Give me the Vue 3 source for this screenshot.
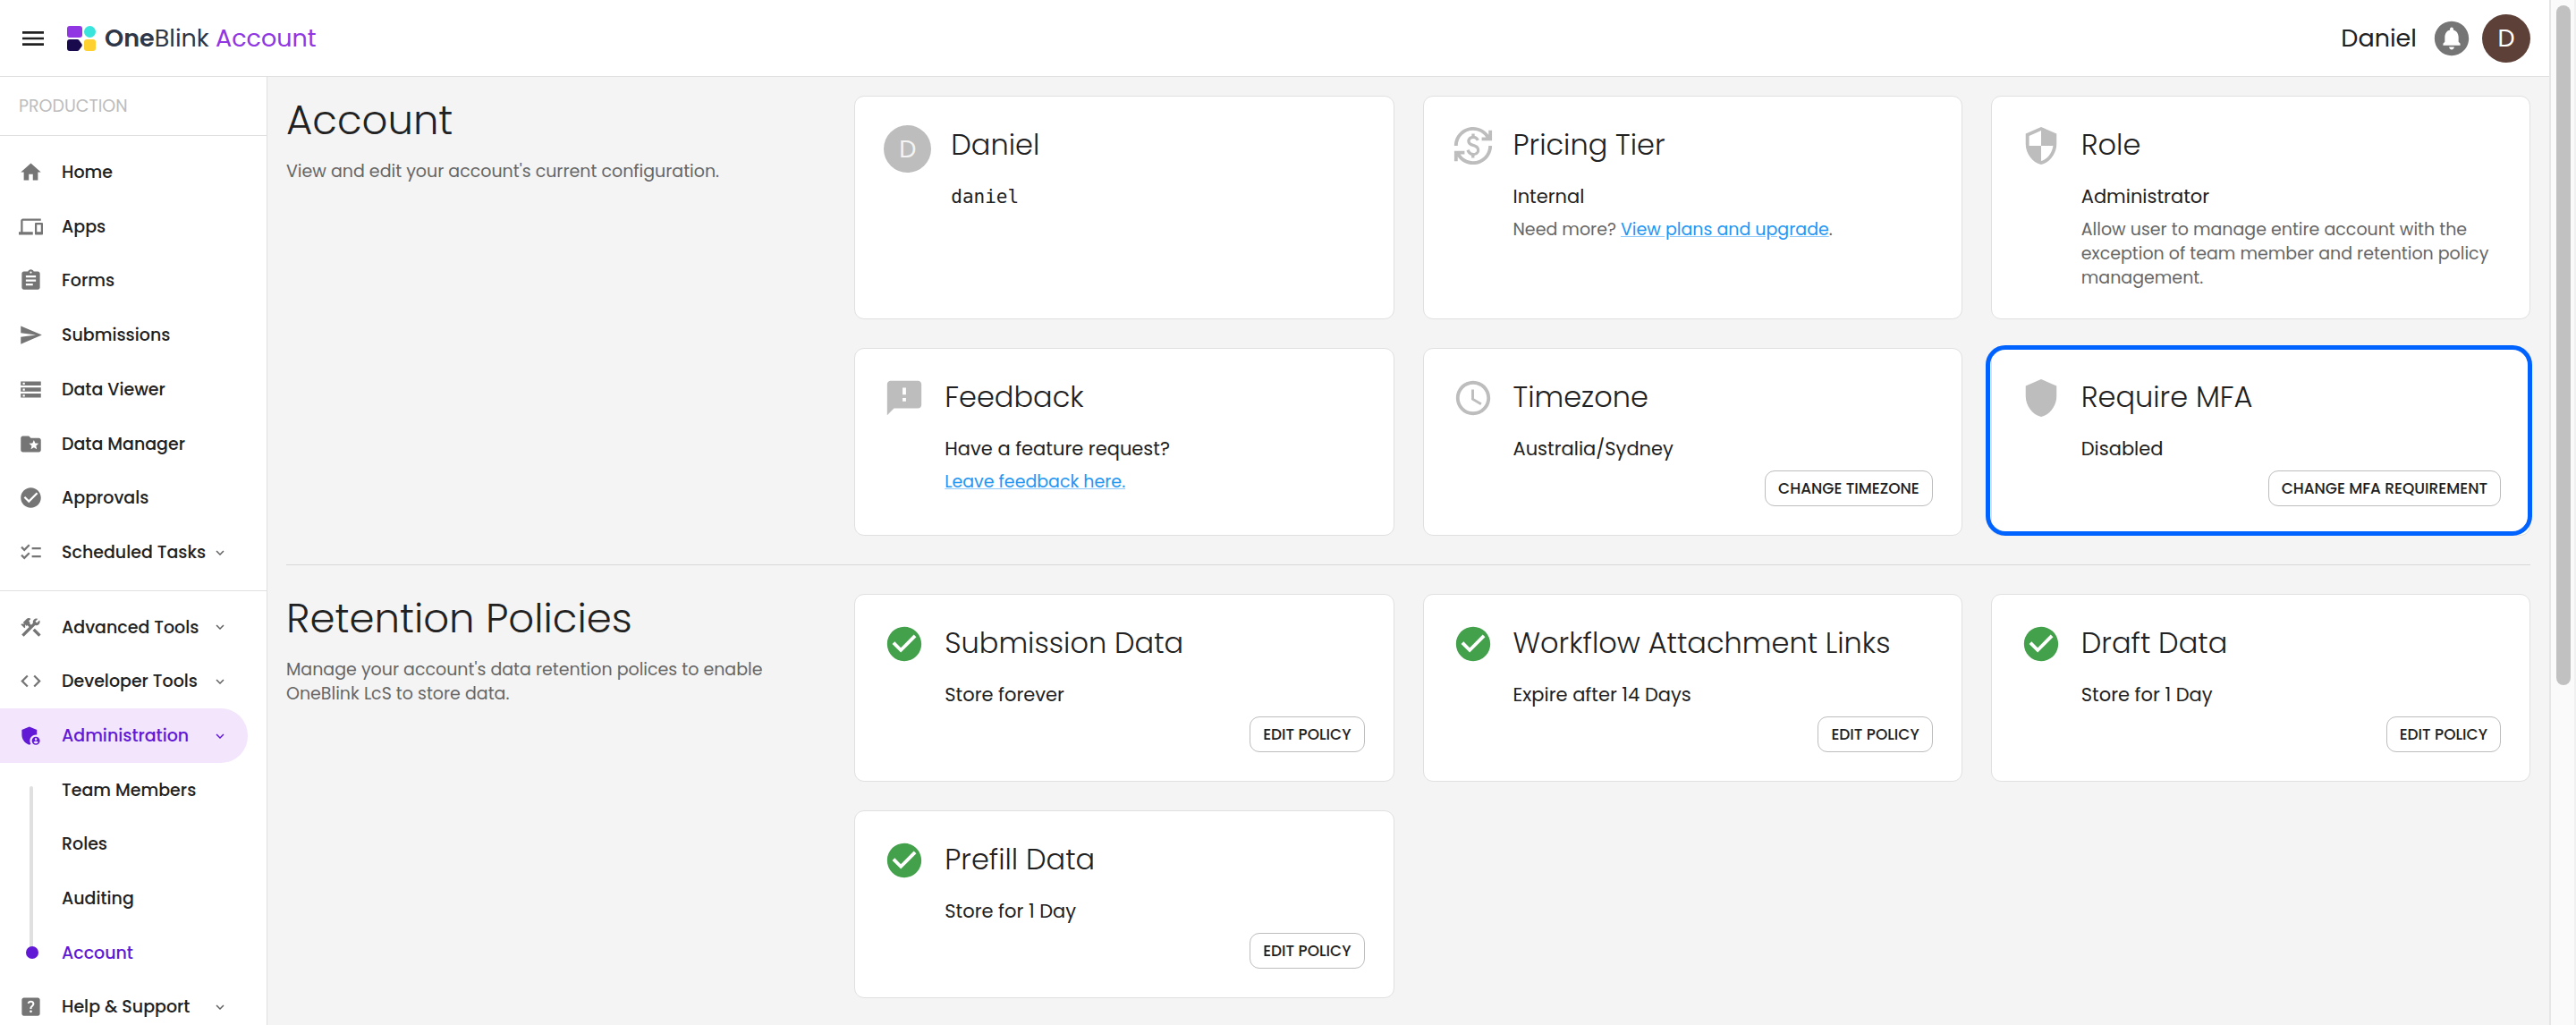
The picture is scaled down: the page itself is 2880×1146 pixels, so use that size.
<script setup>
const icons = {
  menu: 'M3 18h18v-2H3v2zm0-5h18v-2H3v2zm0-7v2h18V6H3z',
  home: 'M10 20v-6h4v6h5v-8h3L12 3 2 12h3v8z',
  devices: 'M4 6h18V4H4c-1.1 0-2 .9-2 2v11H0v3h14v-3H4V6zm19 2h-6c-.55 0-1 .45-1 1v10c0 .55.45 1 1 1h6c.55 0 1-.45 1-1V9c0-.55-.45-1-1-1zm-1 9h-4v-7h4v7z',
  assignment: 'M19 3h-4.18C14.4 1.84 13.3 1 12 1c-1.3 0-2.4.84-2.82 2H5c-1.1 0-2 .9-2 2v14c0 1.1.9 2 2 2h14c1.1 0 2-.9 2-2V5c0-1.1-.9-2-2-2zm-7 0c.55 0 1 .45 1 1s-.45 1-1 1-1-.45-1-1 .45-1 1-1zm2 14H7v-2h7v2zm3-4H7v-2h10v2zm0-4H7V7h10v2z',
  send: 'M2.01 21L23 12 2.01 3 2 10l15 2-15 2z',
  storage: 'M2 20h20v-4H2v4zm2-3h2v2H4v-2zM2 4v4h20V4H2zm4 3H4V5h2v2zm-4 7h20v-4H2v4zm2-3h2v2H4v-2z',
  folder: 'M20 6h-8l-2-2H4c-1.1 0-1.99.9-1.99 2L2 18c0 1.1.9 2 2 2h16c1.1 0 2-.9 2-2V8c0-1.1-.9-2-2-2zm-2.06 11L15 15.28 12.06 17l.78-3.33-2.59-2.24 3.41-.29L15 8l1.34 3.14 3.41.29-2.59 2.24.78 3.33z',
  check: 'M12 2C6.48 2 2 6.48 2 12s4.48 10 10 10 10-4.48 10-10S17.52 2 12 2zm-2 15l-5-5 1.41-1.41L10 14.17l7.59-7.59L19 8l-9 9z',
  checklist: 'M22 7h-9v2h9V7zm0 8h-9v2h9v-2zM5.54 11 2 7.46l1.41-1.41 2.12 2.12 4.24-4.24 1.41 1.41L5.54 11zm0 8L2 15.46l1.41-1.41 2.12 2.12 4.24-4.24 1.41 1.41L5.54 19z',
  tools: 'm13.78 15.17 2.12-2.12 6 6-2.12 2.12zM17.5 10c1.93 0 3.5-1.57 3.5-3.5 0-.58-.16-1.12-.41-1.6l-2.7 2.7-1.49-1.49 2.7-2.7c-.48-.25-1.02-.41-1.6-.41C15.57 3 14 4.57 14 6.5c0 .41.08.8.21 1.16l-1.85 1.85-1.78-1.78.71-.71-1.41-1.41L12 3.49c-1.17-1.17-3.07-1.17-4.24 0L4.22 7.03l1.41 1.41H2.81l-.71.71 3.54 3.54.71-.71V9.15l1.41 1.41.71-.71 1.78 1.78-7.41 7.41 2.12 2.12L16.34 9.79c.36.13.75.21 1.16.21z',
  code: 'M9.4 16.6L4.8 12l4.6-4.6L8 6l-6 6 6 6 1.4-1.4zm5.2 0l4.6-4.6-4.6-4.6L16 6l6 6-6 6-1.4-1.4z',
  admin: 'M17 11c.34 0 .67.04 1 .09V6.27L10.5 3 3 6.27v4.91c0 4.54 3.2 8.79 7.5 9.82.55-.13 1.08-.32 1.6-.55-.69-.98-1.1-2.17-1.1-3.45 0-3.31 2.69-6 6-6zM17 13c-2.21 0-4 1.79-4 4s1.79 4 4 4 4-1.79 4-4-1.79-4-4-4zm0 1.38c.62 0 1.12.51 1.12 1.12s-.51 1.12-1.12 1.12-1.12-.51-1.12-1.12.5-1.12 1.12-1.12zm0 5.37c-.93 0-1.74-.46-2.24-1.17.05-.72 1.51-1.08 2.24-1.08s2.19.36 2.24 1.08c-.5.71-1.31 1.17-2.24 1.17z',
  help: 'M19 3H5c-1.1 0-2 .9-2 2v14c0 1.1.9 2 2 2h14c1.1 0 2-.9 2-2V5c0-1.1-.9-2-2-2zm-6.99 15c-.7 0-1.26-.56-1.26-1.26 0-.71.56-1.25 1.26-1.25.71 0 1.25.54 1.25 1.25-.01.69-.54 1.26-1.25 1.26zm3.01-7.4c-.76 1.11-1.48 1.46-1.87 2.17-.16.29-.22.48-.22 1.41h-1.82c0-.49-.08-1.29.31-1.98.49-.87 1.42-1.39 1.96-2.16.57-.81.25-2.33-1.37-2.33-1.06 0-1.58.8-1.8 1.48l-1.65-.7C9.01 7.15 10.22 6 11.99 6c1.48 0 2.49.67 3.01 1.52.44.72.7 2.07.02 3.08z',
  chevron: 'M16.59 8.59 12 13.17 7.41 8.59 6 10l6 6 6-6z',
  bell: 'M12 2C6.48 2 2 6.48 2 12s4.48 10 10 10 10-4.48 10-10S17.52 2 12 2zm0 16.5c-.83 0-1.5-.67-1.5-1.5h3c0 .83-.67 1.5-1.5 1.5zm5-2.5H7v-1l1-1v-2.61C8 9.27 9.03 7.47 11 7v-.5c0-.57.43-1 1-1s1 .43 1 1V7c1.97.47 3 2.28 3 4.39V14l1 1v1z',
  currency: 'M12.89 11.1c-1.78-.59-2.64-.96-2.64-1.9 0-1.02 1.11-1.39 1.81-1.39 1.31 0 1.79.99 1.9 1.34l1.58-.67c-.15-.44-.82-1.91-2.66-2.23V5h-1.75v1.26c-2.6.56-2.62 2.85-2.62 2.96 0 2.27 2.25 2.91 3.35 3.31 1.58.56 2.28 1.07 2.28 2.03 0 1.13-1.05 1.61-1.98 1.61-1.82 0-2.34-1.87-2.4-2.09l-1.66.67c.63 2.19 2.28 2.78 2.9 2.96V19h1.75v-1.24c.52-.09 3.02-.59 3.02-3.22.01-1.39-.6-2.61-2.88-3.44zM3 21H1v-6h6v2H4.52c1.61 2.41 4.36 4 7.48 4 4.97 0 9-4.03 9-9h2c0 6.08-4.92 11-11 11-3.72 0-7.01-1.85-9-4.67V21zm-2-9C1 5.92 5.92 1 12 1c3.72 0 7.01 1.85 9 4.67V3h2v6h-6V7h2.48C17.87 4.59 15.12 3 12 3c-4.97 0-9 4.03-9 9H1z',
  security: 'M12 1L3 5v6c0 5.55 3.84 10.74 9 12 5.16-1.26 9-6.45 9-12V5l-9-4zm0 10.99h7c-.53 4.12-3.28 7.79-7 8.94V12H5V6.3l7-3.11v8.8z',
  shield: 'M12 1L3 5v6c0 5.55 3.84 10.74 9 12 5.16-1.26 9-6.45 9-12V5l-9-4z',
  feedback: 'M20 2H4c-1.1 0-1.99.9-1.99 2L2 22l4-4h14c1.1 0 2-.9 2-2V4c0-1.1-.9-2-2-2zm-7 12h-2v-2h2v2zm0-4h-2V6h2v4z',
  clock: 'M11.99 2C6.47 2 2 6.48 2 12s4.47 10 9.99 10C17.52 22 22 17.52 22 12S17.52 2 11.99 2zM12 20c-4.42 0-8-3.58-8-8s3.58-8 8-8 8 3.58 8 8-3.58 8-8 8zm.5-13H11v6l5.25 3.15.75-1.23-4.5-2.67z',
}

const mainNav = [
  { label: 'Home', icon: 'home' },
  { label: 'Apps', icon: 'devices' },
  { label: 'Forms', icon: 'assignment' },
  { label: 'Submissions', icon: 'send' },
  { label: 'Data Viewer', icon: 'storage' },
  { label: 'Data Manager', icon: 'folder' },
  { label: 'Approvals', icon: 'check' },
  { label: 'Scheduled Tasks', icon: 'checklist', expandable: true },
]

const toolNav = [
  { label: 'Advanced Tools', icon: 'tools', expandable: true },
  { label: 'Developer Tools', icon: 'code', expandable: true },
  {
    label: 'Administration',
    icon: 'admin',
    expandable: true,
    active: true,
    children: ['Team Members', 'Roles', 'Auditing', 'Account'],
  },
  { label: 'Help & Support', icon: 'help', expandable: true },
]

const sections = [
  {
    title: 'Account',
    text: "View and edit your account's current configuration.",
    cards: [
      { title: 'Daniel', avatar: 'D', value: 'daniel', mono: true },
      { title: 'Pricing Tier', icon: 'currency', value: 'Internal', note: 'Need more? ', link: 'View plans and upgrade', after: '.' },
      {
        title: 'Role',
        icon: 'security',
        value: 'Administrator',
        note: 'Allow user to manage entire account with the exception of team member and retention policy management.',
      },
      { title: 'Feedback', icon: 'feedback', value: 'Have a feature request?', link: 'Leave feedback here.' },
      { title: 'Timezone', icon: 'clock', value: 'Australia/Sydney', action: 'Change Timezone' },
      { title: 'Require MFA', icon: 'shield', value: 'Disabled', action: 'Change MFA Requirement', highlight: true },
    ],
  },
  {
    title: 'Retention Policies',
    text: "Manage your account's data retention polices to enable OneBlink LcS to store data.",
    cards: [
      { title: 'Submission Data', icon: 'check', ok: true, value: 'Store forever', action: 'Edit Policy' },
      { title: 'Workflow Attachment Links', icon: 'check', ok: true, value: 'Expire after 14 Days', action: 'Edit Policy' },
      { title: 'Draft Data', icon: 'check', ok: true, value: 'Store for 1 Day', action: 'Edit Policy' },
      { title: 'Prefill Data', icon: 'check', ok: true, value: 'Store for 1 Day', action: 'Edit Policy' },
    ],
  },
]
</script>

<template>
  <div class="page">
    <div class="app">
      <header class="topbar">
        <button class="menu-button" type="button" aria-label="Toggle menu">
          <svg viewBox="0 0 24 24"><path :d="icons.menu" /></svg>
        </button>
        <a class="brand" href="#">
          <svg class="logo" viewBox="0 0 32 28" aria-hidden="true">
            <rect width="17" height="13" rx="3" fill="#9037e3" />
            <circle cx="25.5" cy="6.500" r="6.500" fill="#38e4dc" />
            <path d="M3 15h8.500q1 0 1.700.8l3.300 4.500q.8 1.200 0 2.400l-3.300 4.500q-.7.800-1.700.8H3q-3 0-3-3v-7q0-3 3-3z" fill="#190a4e" />
            <rect x="19" y="15" width="13" height="13" rx="3" fill="#ffd130" />
          </svg>
          <span class="brand-name"><b>One</b>Blink <span class="product">Account</span></span>
        </a>
        <div class="user">
          <span class="user-name">Daniel</span>
          <button class="bell" type="button" aria-label="Notifications">
            <svg viewBox="0 0 24 24"><path :d="icons.bell" /></svg>
          </button>
          <button class="avatar brown" type="button" aria-label="Profile">D</button>
        </div>
      </header>

      <div class="body">
        <nav class="sidebar">
          <p class="environment">PRODUCTION</p>
          <ul class="nav-list">
            <li v-for="item in mainNav" :key="item.label">
              <a class="nav-item" href="#">
                <svg class="nav-icon" viewBox="0 0 24 24"><path :d="icons[item.icon]" /></svg>
                <span class="nav-label">{{ item.label }}</span>
                <svg v-if="item.expandable" class="chevron" viewBox="0 0 24 24"><path :d="icons.chevron" /></svg>
              </a>
            </li>
          </ul>
          <ul class="nav-list second">
            <template v-for="item in toolNav" :key="item.label">
              <li>
                <a class="nav-item" :class="{ active: item.active }" href="#">
                  <svg class="nav-icon" viewBox="0 0 24 24"><path :d="icons[item.icon]" /></svg>
                  <span class="nav-label">{{ item.label }}</span>
                  <svg v-if="item.expandable" class="chevron" viewBox="0 0 24 24"><path :d="icons.chevron" /></svg>
                </a>
              </li>
              <li v-if="item.children" class="sub">
                <ul class="sub-list">
                  <li v-for="child in item.children" :key="child">
                    <a class="nav-item" :class="{ current: child === 'Account' }" href="#">
                      <span class="nav-slot"><i v-if="child === 'Account'" class="dot"></i></span>
                      <span class="nav-label">{{ child }}</span>
                    </a>
                  </li>
                </ul>
              </li>
            </template>
          </ul>
        </nav>

        <main class="content">
          <section v-for="section in sections" :key="section.title" class="section">
            <div class="intro">
              <h1>{{ section.title }}</h1>
              <p>{{ section.text }}</p>
            </div>
            <div class="cards">
              <article v-for="card in section.cards" :key="card.title" class="card" :class="{ highlight: card.highlight }">
                <span v-if="card.avatar" class="avatar grey">{{ card.avatar }}</span>
                <svg v-else class="card-icon" :class="{ ok: card.ok }" viewBox="0 0 24 24"><path :d="icons[card.icon]" /></svg>
                <div class="card-body">
                  <h2>{{ card.title }}</h2>
                  <p class="value" :class="{ mono: card.mono }">{{ card.value }}</p>
                  <p v-if="card.note || card.link" class="note">{{ card.note }}<a v-if="card.link" href="#">{{ card.link }}</a>{{ card.after }}</p>
                  <button v-if="card.action" class="action" type="button">{{ card.action }}</button>
                </div>
              </article>
            </div>
          </section>
        </main>
      </div>
    </div>
    <div class="scrollbar" aria-hidden="true"><div class="thumb"></div></div>
  </div>
</template>

<style>
body {
  margin: 0;
}
</style>

<style scoped>
.page {
  display: flex;
  height: 100vh;
  overflow: hidden;
  background: #f4f4f4;
  color: #212121;
  font-family: Poppins, Inter, sans-serif;
  font-size: 19px;
}
.page * {
  box-sizing: border-box;
}
svg {
  display: block;
  flex: none;
  fill: currentColor;
}
h1, h2, p, ul {
  margin: 0;
  padding: 0;
}
ul {
  list-style: none;
}
button {
  padding: 0;
  border: 0;
  background: none;
  color: inherit;
  font: inherit;
  cursor: pointer;
}
a {
  color: inherit;
  text-decoration: none;
}
.app {
  flex: 1;
  min-width: 0;
  display: flex;
  flex-direction: column;
}

.topbar {
  flex: none;
  display: flex;
  align-items: center;
  height: 86px;
  padding: 0 21px;
  background: #fff;
  border-bottom: 1px solid #e0e0e0;
}
.menu-button svg {
  width: 32px;
  height: 32px;
}
.brand {
  display: flex;
  align-items: center;
  gap: 10px;
  margin-left: 22px;
  color: #2d3748;
  font-size: 27px;
}
.brand b {
  font-weight: 600;
}
.logo {
  width: 32px;
  height: 28px;
}
.product {
  color: #9037e3;
}
.user {
  display: flex;
  align-items: center;
  gap: 11px;
  margin-left: auto;
}
.user-name {
  margin-right: 5px;
  font-size: 27px;
}
.bell {
  color: #757575;
}
.bell svg {
  width: 46px;
  height: 46px;
}
.avatar {
  flex: none;
  display: flex;
  align-items: center;
  justify-content: center;
  width: 54px;
  height: 54px;
  border-radius: 50%;
  color: #fff;
  font-size: 27px;
}
.brown {
  background: #5d4037;
}
.grey {
  width: 53px;
  height: 53px;
  background: #bdbdbd;
  color: #f4f4f4;
}

.body {
  flex: 1;
  min-height: 0;
  display: flex;
}
.sidebar {
  flex: none;
  width: 299px;
  overflow: hidden;
  background: #fff;
  border-right: 1px solid #e0e0e0;
}
.environment {
  padding: 0 21px;
  border-bottom: 1px solid #e0e0e0;
  color: #bdbdbd;
  line-height: 65px;
}
.nav-list {
  display: grid;
  grid-auto-rows: 1fr;
  min-height: 508px;
  padding: 10px 21px 12px 0;
}
.second {
  border-top: 1px solid #e0e0e0;
}
.nav-item {
  display: flex;
  align-items: center;
  height: 100%;
  padding: 0 22px 0 21px;
  border-radius: 0 30px 30px 0;
  font-weight: 500;
}
.nav-icon,
.nav-slot {
  flex: none;
  width: 27px;
  height: 27px;
  margin-right: 21px;
  color: #757575;
}
.nav-label {
  white-space: nowrap;
}
.chevron {
  width: 18px;
  height: 18px;
  margin-left: auto;
  color: #616161;
}
.active {
  background: #f3e6fc;
}
.active,
.active svg,
.current {
  color: #6119d5;
}
.sub {
  grid-row: span 4;
}
.sub-list {
  position: relative;
  display: grid;
  grid-auto-rows: 1fr;
  height: 100%;
}
.sub-list::before {
  content: '';
  position: absolute;
  top: 26px;
  bottom: 30px;
  left: 33px;
  width: 4px;
  border-radius: 2px;
  background: #e0e0e0;
}
.nav-slot {
  position: relative;
  display: flex;
  align-items: center;
  justify-content: center;
  padding-left: 3px;
}
.dot {
  width: 14px;
  height: 14px;
  border-radius: 50%;
  background: #6119d5;
}

.content {
  flex: 1;
  min-width: 0;
  padding: 21px;
}
.section {
  display: grid;
  grid-template-columns: repeat(4, minmax(0, 1fr));
  gap: 32px;
}
.section + .section {
  margin-top: 32px;
  padding-top: 32px;
  border-top: 1px solid #d8d8d8;
}
.intro h1 {
  font-size: 45px;
  font-weight: 300;
  line-height: 56px;
}
.intro p {
  margin-top: 15px;
  color: #666;
  line-height: 27px;
}
.cards {
  grid-column: span 3;
  display: grid;
  grid-template-columns: repeat(3, minmax(0, 1fr));
  gap: 32px;
}
.card {
  position: relative;
  display: flex;
  align-items: flex-start;
  gap: 22px;
  padding: 32px;
  border: 1px solid #e0e0e0;
  border-radius: 11px;
  background: #fff;
}
.highlight::after {
  content: '';
  position: absolute;
  inset: -4px -3px -1px -7px;
  border: 5px solid #0062ff;
  border-radius: 22px;
  pointer-events: none;
}
.card-icon {
  width: 46px;
  height: 46px;
  color: #bdbdbd;
}
.ok {
  color: #43a04b;
}
.card-body {
  flex: 1;
  min-width: 0;
  display: flex;
  flex-direction: column;
}
.card h2 {
  font-size: 32px;
  font-weight: 300;
  line-height: 43px;
}
.value {
  margin-top: 21px;
  font-size: 21px;
  line-height: 32px;
}
.mono {
  font-family: "DejaVu Sans Mono", monospace;
}
.note {
  margin-top: 7px;
  color: #666;
  line-height: 27px;
}
.note a {
  color: #2196f3;
  text-decoration: underline;
  text-decoration-color: #90caf9;
}
.action {
  align-self: flex-end;
  height: 40px;
  margin-top: 8px;
  padding: 0 14px;
  border: 1px solid #bdbdbd;
  border-radius: 11px;
  background: #fff;
  font-size: 17px;
  font-weight: 500;
  text-transform: uppercase;
}

.scrollbar {
  flex: none;
  width: 30px;
  padding: 6px;
  border-left: 2px solid #e6e6e6;
  border-right: 2px solid #f0f0f0;
  background: #fafafa;
}
.thumb {
  width: 16px;
  height: 67%;
  border-radius: 8px;
  background: #c1c1c1;
}
</style>
